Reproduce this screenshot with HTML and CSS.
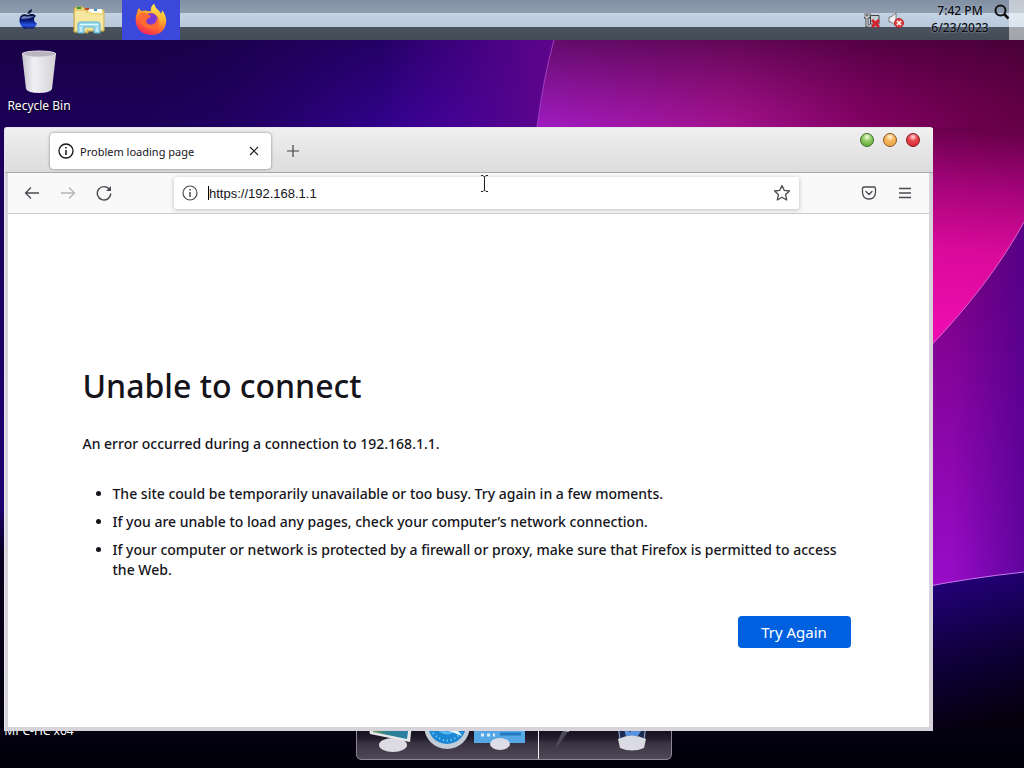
FILE: index.html
```
<!DOCTYPE html>
<html lang="en">
<head>
    <meta charset="UTF-8">
    <meta name="viewport" content="width=device-width, initial-scale=1.0">
    <title>Problem loading page</title>
    <link rel="stylesheet" href="styles.css">
</head>
<body>
    <!-- Wallpaper -->
    <svg class="wallpaper" viewBox="0 0 1024 768" preserveAspectRatio="none" aria-hidden="true">
        <defs>
            <linearGradient id="base" x1="0" y1="0" x2="0" y2="1">
                <stop offset="0" stop-color="#180040"/>
                <stop offset="0.16" stop-color="#1c0058"/>
                <stop offset="0.66" stop-color="#1d0070"/>
                <stop offset="0.72" stop-color="#08001f"/>
                <stop offset="1" stop-color="#02000c"/>
            </linearGradient>
            <radialGradient id="blueGlow" gradientUnits="userSpaceOnUse" cx="440" cy="210" r="340">
                <stop offset="0" stop-color="#4604c0"/>
                <stop offset="1" stop-color="#1a0050" stop-opacity="0"/>
            </radialGradient>
            <linearGradient id="purpleEdge" x1="0" y1="0" x2="1" y2="0">
                <stop offset="0" stop-color="#5a00a0" stop-opacity="0"/>
                <stop offset="1" stop-color="#62068c"/>
            </linearGradient>
            <linearGradient id="aurora" gradientUnits="userSpaceOnUse" x1="537" y1="0" x2="1024" y2="0">
                <stop offset="0" stop-color="#a01cc4"/>
                <stop offset="0.4" stop-color="#a4128e"/>
                <stop offset="0.7" stop-color="#800060"/>
                <stop offset="1" stop-color="#640044"/>
            </linearGradient>
            <linearGradient id="shade" x1="0" y1="0" x2="0" y2="1">
                <stop offset="0" stop-color="#30002c" stop-opacity="0.65"/>
                <stop offset="1" stop-color="#50003c" stop-opacity="0"/>
            </linearGradient>
            <linearGradient id="pink" gradientUnits="userSpaceOnUse" x1="950" y1="127" x2="930" y2="330">
                <stop offset="0" stop-color="#68004a"/>
                <stop offset="0.3" stop-color="#a8047c"/>
                <stop offset="0.6" stop-color="#da0a9a"/>
                <stop offset="1" stop-color="#ee0cb0"/>
            </linearGradient>
            <linearGradient id="violet" gradientUnits="userSpaceOnUse" x1="960" y1="240" x2="950" y2="580">
                <stop offset="0" stop-color="#760078"/>
                <stop offset="0.4" stop-color="#86049c"/>
                <stop offset="1" stop-color="#980cc8"/>
            </linearGradient>
            <linearGradient id="violetShade" gradientUnits="userSpaceOnUse" x1="950" y1="0" x2="1024" y2="0">
                <stop offset="0" stop-color="#48008c" stop-opacity="0"/>
                <stop offset="1" stop-color="#48008c" stop-opacity="0.7"/>
            </linearGradient>
            <linearGradient id="night" gradientUnits="userSpaceOnUse" x1="930" y1="575" x2="970" y2="730">
                <stop offset="0" stop-color="#260080"/>
                <stop offset="0.5" stop-color="#100040"/>
                <stop offset="1" stop-color="#04000c"/>
            </linearGradient>
        </defs>
        <rect width="1024" height="768" fill="url(#base)"/>
        <rect width="1024" height="500" fill="url(#blueGlow)"/>
        <rect x="380" y="30" width="180" height="110" fill="url(#purpleEdge)"/>
        <path d="M554 40 Q543 80 537 130 H1024 V30 H556Z" fill="url(#aurora)"/>
        <path d="M554 40 Q543 80 537 130 H1024 V30 H556Z" fill="url(#shade)"/>
        <path d="M924 200 H1024 V600 H924Z" fill="url(#violet)"/>
        <path d="M924 200 H1024 V600 H924Z" fill="url(#violetShade)"/>
        <path d="M924 127 H1024 V222 Q990 285 924 353Z" fill="url(#pink)"/>
        <path d="M554 40 Q543 80 537 127" fill="none" stroke="#c060e0" stroke-opacity="0.6"/>
        <path d="M1024 222 Q990 285 924 353" fill="none" stroke="#e878e0" stroke-opacity="0.8"/>
        <path d="M924 587 Q970 578 1024 572 V730 H924Z" fill="url(#night)"/>
        <path d="M924 587 Q970 578 1024 572" fill="none" stroke="#c878ec"/>
    </svg>

    <!-- Top bar -->
    <header class="taskbar">
        <button class="task start" aria-label="Start">
            <svg width="20" height="22" viewBox="0 0 20 22">
                <defs>
                    <linearGradient id="apple" x1="0" y1="0" x2="0" y2="1">
                        <stop offset="0" stop-color="#0b1230"/>
                        <stop offset="0.45" stop-color="#0a1a80"/>
                        <stop offset="0.75" stop-color="#2a55e8"/>
                        <stop offset="1" stop-color="#0a1550"/>
                    </linearGradient>
                </defs>
                <path d="M9.500 5 Q9.500 1.500 14 0 Q14.300 4.500 9.500 5Z" fill="#111a3c"/>
                <path d="M10 6 C12 5 15.500 4 18 7 C15 9 15.500 13 19 14.500 C17.500 18 15.500 20.500 13.500 19.800 C11 19 10.500 19 8.500 19.800 C5 21 1 15 1.500 10.500 C2 5.500 6 4.500 10 6Z" fill="url(#apple)"/>
                <path d="M3 10 Q4 6 9 7.500 L16 7 Q13 10 3 10Z" fill="#b9c8ff" opacity="0.6"/>
            </svg>
        </button>
        <button class="task files" aria-label="File Explorer">
            <svg width="34" height="30" viewBox="0 0 34 30">
                <path d="M2 4 L4 2 H11 L13 4 H16 V28 L2 27Z" fill="#e8cf72" stroke="#c7a548"/>
                <path d="M3 6 H31 V26 H3Z" fill="#f3e7a4"/>
                <path d="M15 5 H32 V26 H15Z" fill="#f0dc85" stroke="#d3b65c"/>
                <path d="M16 4 H30 V8 H20 L16 6Z" fill="#fffdf0"/>
                <path d="M5 2 h4 v2 h-4z" fill="#2f9b39"/>
                <path d="M13 3 h4 v2 h-4z" fill="#c24a2c"/>
                <path d="M22 4 h3 v2 h-3z" fill="#3a8dcc"/>
                <path d="M4 8 H15 L19 10 H31 V24 H4Z" fill="#f5e6a0"/>
                <path d="M6 28 V19 Q6 17 9 17 H25 Q28 17 28 19 V28 H22 V22 H12 V28Z" fill="#9fdbec" stroke="#5cb1d2"/>
                <path d="M8 19.500 H26 M9 22 V27 M25 22 V27" stroke="#e0f8ff" fill="none"/>
            </svg>
        </button>
        <button class="task active" aria-label="Firefox">
            <svg width="34" height="34" viewBox="0 0 34 34">
                <defs>
                    <linearGradient id="fox" x1="0.8" y1="0" x2="0.3" y2="1">
                        <stop offset="0" stop-color="#fff04a"/>
                        <stop offset="0.35" stop-color="#ffb42c"/>
                        <stop offset="0.7" stop-color="#ff6034"/>
                        <stop offset="1" stop-color="#f0245c"/>
                    </linearGradient>
                    <radialGradient id="globe">
                        <stop offset="0" stop-color="#6a3ae0"/>
                        <stop offset="1" stop-color="#8c3cc4"/>
                    </radialGradient>
                    <linearGradient id="flame" x1="0" y1="0" x2="0" y2="1">
                        <stop offset="0" stop-color="#ffe84a"/>
                        <stop offset="1" stop-color="#ff9a30"/>
                    </linearGradient>
                </defs>
                <path d="M3 10 Q3 7 5 5 Q6 8 8 8 Q11 7 14 8 Q17 9 17 7 Q17 3 20 1 Q21 5 25 8 L27 11 Q28 9 28 7 Q33 13 32 20 Q30 32 17 32 Q4 31 2 20 Q1 14 3 10Z" fill="url(#fox)"/>
                <circle cx="17" cy="17" r="7" fill="url(#globe)"/>
                <path d="M5 12 Q9 8 13 11 L17 13 Q16 15 13 16 Q11 19 14 21 Q18 23 21 20 Q23 19 22 16 Q26 17 24 22 Q21 27 15 26 Q6 24 5 12Z" fill="#ff6a34"/>
                <path d="M17 7 Q17 3 20 1 Q21 5 25 8 Q31 14 27 23 Q27 14 21 11 Q18 9 17 7Z" fill="url(#flame)"/>
            </svg>
        </button>
        <div class="tray">
            <svg width="16" height="16" viewBox="0 0 16 16" role="img" aria-label="Network disconnected">
                <path d="M6.500 3.500 H15 V12 H6.500Z" fill="#c4ced4" stroke="#444"/>
                <path d="M1 1 V5 H5 V1 M3 5 V14 H6" fill="none" stroke="#444" stroke-width="3"/>
                <path d="M1 1 V5 H5 V1 M3 5 V14 H6" fill="none" stroke="#fff"/>
                <path d="M8 8 L15 15 M15 8 L8 15" stroke="#d3222a" stroke-width="3"/>
            </svg>
            <svg width="16" height="16" viewBox="0 0 16 16" role="img" aria-label="Muted">
                <path d="M1 5 H3 L8 1 V14 L3 10 H1Z" fill="#f2f2f2" stroke="#777"/>
                <circle cx="11" cy="11" r="4.500" fill="#e04848" stroke="#b81c20"/>
                <path d="M9 9 L13 13 M13 9 L9 13" stroke="#fff" stroke-width="1.500"/>
            </svg>
        </div>
        <div class="clock">
            <time>7:42 PM</time>
            <time>6/23/2023</time>
        </div>
        <button class="search" aria-label="Search">
            <svg width="16" height="16" viewBox="0 0 16 16" fill="none" stroke="#111">
                <circle cx="6.500" cy="6.500" r="5" stroke-width="2"/>
                <path d="M10 10 L14.500 14.500" stroke-width="2.500"/>
            </svg>
        </button>
        <div class="show-desktop"></div>
    </header>

    <main class="desktop">
        <a href="#" class="shortcut recycle">
            <svg width="36" height="44" viewBox="0 0 36 44">
                <defs>
                    <linearGradient id="bin" x1="0" y1="0" x2="1" y2="0">
                        <stop offset="0" stop-color="#c4c2cc"/>
                        <stop offset="0.35" stop-color="#f1f0f3"/>
                        <stop offset="1" stop-color="#d2d0d6"/>
                    </linearGradient>
                </defs>
                <path d="M1 4 L5 39 Q7 43 18 43 Q29 43 31 39 L35 4Z" fill="url(#bin)"/>
                <ellipse cx="18" cy="4" rx="17" ry="3" fill="#b8b5c0" stroke="#dddbe2"/>
            </svg>
            <span>Recycle Bin</span>
        </a>
        <a href="#" class="shortcut player"><span>MPC-HC x64</span></a>

        <!-- Dock -->
        <div class="dock">
            <svg width="316" height="36" viewBox="0 0 316 36" aria-hidden="true">
                <defs>
                    <linearGradient id="dockFill" x1="0" y1="0" x2="0" y2="1">
                        <stop offset="0" stop-color="#0a0618"/>
                        <stop offset="0.4" stop-color="#221c2c"/>
                        <stop offset="0.55" stop-color="#3a3343"/>
                        <stop offset="1" stop-color="#514a59"/>
                    </linearGradient>
                    <linearGradient id="screen" x1="0" y1="0" x2="1" y2="0">
                        <stop offset="0" stop-color="#7da04a"/>
                        <stop offset="0.4" stop-color="#2f7f8c"/>
                        <stop offset="1" stop-color="#2b7fa8"/>
                    </linearGradient>
                </defs>
                <path d="M.5 0 V30 Q.5 35.500 6 35.500 H310 Q315.500 35.500 315.500 30 V0Z" fill="url(#dockFill)" stroke="#8b8692"/>
                <path d="M182.500 0 V35" stroke="#f0f0f2"/>
                <!-- Computer -->
                <ellipse cx="37" cy="21" rx="14" ry="7" fill="#dcdbe2"/>
                <path d="M12 0 L14 10 L54 18 L56 0Z" fill="#e6e8ea"/>
                <path d="M15 0 L17 8 L51 15 L53 0Z" fill="url(#screen)"/>
                <!-- Safari -->
                <circle cx="91" cy="2" r="23" fill="#c3cdd6"/>
                <circle cx="91" cy="1" r="19" fill="#1b86d4"/>
                <path d="M77 9 Q91 24 105 9" fill="none" stroke="#8edcff" stroke-width="2" stroke-dasharray="1 3"/>
                <path d="M84 6 Q91 12 98 6" fill="none" stroke="#58b8f0" stroke-width="3"/>
                <path d="M88 5 L106 12 L100 4Z" fill="#eaf7ff"/>
                <!-- Display -->
                <path d="M118 0 H169 V19 H118Z" fill="#55a7e6"/>
                <path d="M125 11 H139" stroke="#d8f0ff" stroke-width="3" stroke-dasharray="3 3"/>
                <path d="M144 10 H165" stroke="#2478c0" stroke-width="3"/>
                <ellipse cx="144" cy="20" rx="10" ry="6" fill="#dcdde6"/>
                <!-- Pen -->
                <path d="M208 4 L213 6 L200 25 Q198 24 208 4Z" fill="#4c4a54"/>
                <path d="M208 6 L213 7" stroke="#bbb" stroke-width="2"/>
                <!-- Trash -->
                <path d="M261 0 H291 L289 20 H263Z" fill="#1c2b50"/>
                <path d="M262 0 L264 16 M290 0 L288 16" stroke="#a4aec8"/>
                <path d="M268 4 L274 8 L278 5 L285 7 L282 12 L270 13Z" fill="#5b90dc"/>
                <path d="M262 15 Q276 8 290 15 L288 24 Q276 29 264 24Z" fill="#d9dae2"/>
            </svg>
        </div>

        <!-- Browser window -->
        <section class="window">
            <div class="titlebar">
                <div class="tab">
                    <svg width="16" height="16" viewBox="0 0 16 16" fill="none" stroke="#15141a">
                        <circle cx="8" cy="8" r="7" stroke-width="1.300"/>
                        <path d="M8 7 V12 M8 4 V5.500" stroke-width="1.500"/>
                    </svg>
                    <span class="tab-title">Problem loading page</span>
                    <button class="icon-btn" aria-label="Close tab">
                        <svg width="10" height="10" viewBox="0 0 10 10" stroke="#222" stroke-width="1.200"><path d="M1 1 L9 9 M9 1 L1 9"/></svg>
                    </button>
                </div>
                <button class="icon-btn new-tab" aria-label="New tab">
                    <svg width="14" height="14" viewBox="0 0 14 14" stroke="#444" stroke-width="1.200"><path d="M7 1 V13 M1 7 H13"/></svg>
                </button>
                <div class="controls">
                    <button class="ball green" aria-label="Minimize"></button>
                    <button class="ball amber" aria-label="Maximize"></button>
                    <button class="ball red" aria-label="Close"></button>
                </div>
            </div>
            <div class="toolbar">
                <button class="icon-btn nav-btn" aria-label="Back">
                    <svg width="16" height="16" viewBox="0 0 16 16" fill="none" stroke="#4a4a50" stroke-width="1.300"><path d="M15 8 H2 M7 2.500 L1.500 8 L7 13.500"/></svg>
                </button>
                <button class="icon-btn nav-btn" aria-label="Forward" disabled>
                    <svg width="16" height="16" viewBox="0 0 16 16" fill="none" stroke="#b4b4b8" stroke-width="1.300"><path d="M1 8 H14 M9 2.500 L14.500 8 L9 13.500"/></svg>
                </button>
                <button class="icon-btn nav-btn" aria-label="Reload">
                    <svg width="16" height="16" viewBox="0 0 16 16" fill="none" stroke="#4a4a50" stroke-width="1.400"><path d="M13.500 4.500 A6.700 6.700 0 1 0 14.700 8.500"/><path d="M15 1 V6 H10Z" fill="#4a4a50" stroke="none"/></svg>
                </button>
                <div class="urlbar">
                    <svg width="16" height="16" viewBox="0 0 16 16" fill="none" stroke="#4a4a50">
                        <circle cx="8" cy="8" r="7" stroke-width="1.200"/>
                        <path d="M8 7 V12 M8 4 V5.500" stroke-width="1.500"/>
                    </svg>
                    <div class="url-field">
                        <input type="text" value="https://192.168.1.1" aria-label="Address">
                    </div>
                    <button class="icon-btn" aria-label="Bookmark this page">
                        <svg width="18" height="18" viewBox="0 0 18 18" fill="none" stroke="#4a4a50" stroke-width="1.300" stroke-linejoin="round"><path d="M9 1.500 L11.200 6.300 L16.500 7 L12.600 10.600 L13.700 16 L9 13.300 L4.300 16 L5.400 10.600 L1.500 7 L6.800 6.300Z"/></svg>
                    </button>
                </div>
                <button class="icon-btn nav-btn" aria-label="Save to Pocket">
                    <svg width="16" height="16" viewBox="0 0 16 16" fill="none" stroke="#4a4a50" stroke-width="1.300" stroke-linecap="round" stroke-linejoin="round"><path d="M3 2 H13 Q14.500 2 14.500 3.500 V7.500 Q14 14 8 14 Q2 14 1.500 7.500 V3.500 Q1.500 2 3 2Z"/><path d="M5 6.500 L8 9.500 L11 6.500"/></svg>
                </button>
                <button class="icon-btn nav-btn" aria-label="Menu">
                    <svg width="14" height="14" viewBox="0 0 14 14" stroke="#4a4a50" stroke-width="1.300"><path d="M1 2.500 H13 M1 7 H13 M1 11.500 H13"/></svg>
                </button>
            </div>
            <div class="page">
                <div class="error">
                    <h1>Unable to connect</h1>
                    <p>An error occurred during a connection to 192.168.1.1.</p>
                    <ul>
                        <li>The site could be temporarily unavailable or too busy. Try again in a few moments.</li>
                        <li>If you are unable to load any pages, check your computer’s network connection.</li>
                        <li>If your computer or network is protected by a firewall or proxy, make sure that Firefox is permitted to access the Web.</li>
                    </ul>
                    <button class="try-again">Try Again</button>
                </div>
            </div>
        </section>

        <!-- Text pointer -->
        <svg class="pointer" width="9" height="17" viewBox="0 0 9 17" fill="none" stroke="#222" aria-hidden="true"><path d="M1 .5 H3 L4.500 2 L6 .5 H8 M4.500 2 V15 M1 16.500 H3 L4.500 15 L6 16.500 H8"/></svg>
    </main>
</body>
</html>
```
FILE: styles.css
```
* {
    box-sizing: border-box;
}

body {
    font-family: "Noto Sans", "Open Sans", sans-serif;
    margin: 0;
    height: 100vh;
    display: flex;
    flex-direction: column;
    overflow: hidden;
    background-color: #05000c;
}

button {
    border: none;
    padding: 0;
    background: none;
    font-family: inherit;
}

svg {
    display: block;
    flex-shrink: 0;
}

.wallpaper {
    position: absolute;
    top: 0;
    left: 0;
    width: 100%;
    height: 100%;
    z-index: -1;
}

/* Top bar */
.taskbar {
    display: flex;
    height: 40px;
    background: linear-gradient(#8290a4 0, #8f9daf 13px, #c3d3e4 13px, #b8c9db 27px, #49525e 27px, #434b56 40px);
}

.task {
    display: flex;
    align-items: center;
    justify-content: center;
}

.start {
    width: 56px;
}

.files {
    width: 66px;
}

.task.active {
    width: 58px;
    background-color: #3b48dc;
}

.tray {
    display: flex;
    align-items: center;
    gap: 8px;
    margin-left: auto;
    margin-right: 26px;
}

.clock {
    display: flex;
    flex-direction: column;
    align-items: center;
    width: 60px;
    padding-top: 2px;
    font-size: 12px;
    font-weight: 500;
    line-height: 17px;
    color: #0a0c12;
    text-shadow: 0 0 2px #b9c4d2;
}

.search {
    display: flex;
    width: 19px;
    padding: 4px 0 0 4px;
}

.show-desktop {
    width: 15px;
    background-color: rgba(255, 255, 255, 0.5);
}

/* Desktop */
.desktop {
    flex: 1;
    position: relative;
}

.shortcut {
    position: absolute;
    left: 0;
    width: 78px;
    display: flex;
    flex-direction: column;
    align-items: center;
    gap: 3px;
    color: white;
    font-size: 12px;
    line-height: 18px;
    white-space: nowrap;
    text-decoration: none;
    text-shadow: 0 1px 2px #000;
}

.recycle {
    top: 10px;
}

.player {
    bottom: 28px;
}

.dock {
    position: absolute;
    bottom: 8px;
    left: 0;
    right: 0;
    display: flex;
    justify-content: center;
    padding-left: 4px;
}

.pointer {
    position: absolute;
    left: 480px;
    top: 135px;
}

/* Browser window */
.window {
    position: absolute;
    top: 87px;
    right: 91px;
    bottom: 37px;
    left: 4px;
    display: flex;
    flex-direction: column;
    padding: 0 4px 4px 3px;
    background-color: #d6d4da;
    border: 1px solid #e8e6ea;
    border-width: 1px 0 0 1px;
    border-radius: 3px 3px 0 0;
}

.titlebar {
    display: flex;
    align-items: center;
    height: 45px;
    margin: 0 -4px 0 -3px;
    padding: 2px 13px 0 45px;
    background: linear-gradient(#f1eff0, #dcdcdc);
    border-bottom: 1px solid #a8a8a8;
}

.tab {
    display: flex;
    align-items: center;
    width: 221px;
    height: 36px;
    padding: 0 12px 0 8px;
    background-color: white;
    border-radius: 4px;
    box-shadow: 0 0 3px rgba(0, 0, 0, 0.45);
}

.tab-title {
    flex: 1;
    padding-left: 6px;
    font-size: 11px;
    color: #15141a;
}

.icon-btn {
    display: flex;
    align-items: center;
    justify-content: center;
}

.new-tab {
    margin-left: 15px;
}

.controls {
    display: flex;
    align-self: flex-start;
    gap: 9px;
    margin-left: auto;
    padding-top: 3px;
}

.ball {
    width: 14px;
    height: 14px;
    border-radius: 50%;
    border: 1px solid #555;
}

.green {
    background: radial-gradient(circle at 50% 25%, #f2ffe4 0, #8fcb62 40%, #5aa032 100%);
    border-color: #3c6a28;
}

.amber {
    background: radial-gradient(circle at 50% 25%, #fff6dc 0, #f5b45c 40%, #e8a040 100%);
    border-color: #8a5620;
}

.red {
    background: radial-gradient(circle at 50% 25%, #ffdcdc 0, #e8444c 40%, #d02430 100%);
    border-color: #84161c;
}

.toolbar {
    display: flex;
    align-items: center;
    height: 41px;
    padding: 0 6px;
    background-color: #f9f9fa;
    border-bottom: 1px solid #ccccce;
}

.nav-btn {
    width: 36px;
    height: 32px;
}

.urlbar {
    display: flex;
    align-items: center;
    flex: 1;
    height: 32px;
    margin: 0 52px;
    padding: 0 8px;
    background-color: white;
    border-radius: 2px;
    box-shadow: 0 1px 4px rgba(0, 0, 0, 0.25);
}

.url-field {
    flex: 1;
    display: flex;
    height: 14px;
    margin-left: 10px;
    border-left: 1px solid #000;
}

.url-field input {
    flex: 1;
    min-width: 0;
    border: none;
    outline: none;
    padding: 0;
    background: none;
    font-family: "Liberation Sans", Arial, sans-serif;
    font-size: 13px;
    color: #15141a;
}

.page {
    flex: 1;
    display: flex;
    flex-direction: column;
    justify-content: center;
    align-items: center;
    padding: 72px 4px 0 0;
    background-color: white;
}

.error {
    width: 100%;
    max-width: 768px;
    color: #15141a;
    font-size: 14px;
    font-weight: 500;
    line-height: 20px;
}

.error h1 {
    margin: 0 0 28px;
    font-size: 32px;
    font-weight: 500;
    line-height: 40px;
}

.error p {
    margin: 0 0 30px;
}

.error ul {
    margin: 0 0 36px;
    padding-left: 30px;
}

.error li {
    margin-bottom: 8px;
}

.try-again {
    display: block;
    width: 113px;
    height: 32px;
    margin-left: auto;
    background-color: #0061e0;
    color: white;
    border-radius: 4px;
    font-size: 15px;
}
```
